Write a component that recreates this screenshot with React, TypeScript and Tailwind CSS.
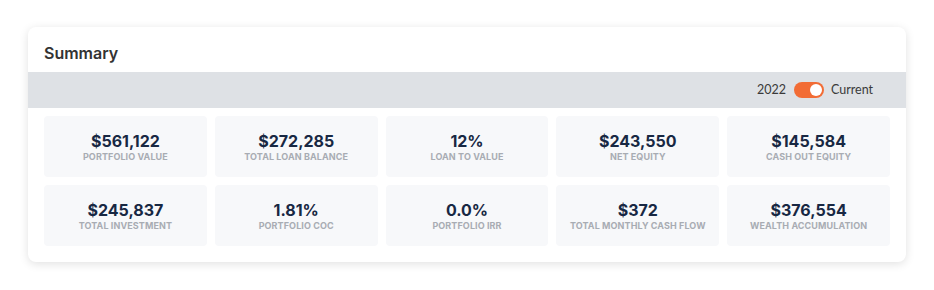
import React from "react";

const stats = [
  { v: "$561,122", l: "Portfolio Value" },
  { v: "$272,285", l: "Total Loan Balance" },
  { v: "12%", l: "Loan to Value" },
  { v: "$243,550", l: "Net Equity" },
  { v: "$145,584", l: "Cash Out Equity" },
  { v: "$245,837", l: "Total Investment" },
  { v: "1.81%", l: "Portfolio CoC" },
  { v: "0.0%", l: "Portfolio IRR" },
  { v: "$372", l: "Total Monthly Cash Flow" },
  { v: "$376,554", l: "Wealth Accumulation" },
];

export default function App() {
  return (
    <div className="w-[934px] h-[290px] bg-white pt-[27px] pl-[28px]" style={{ fontFamily: "Inter, 'Noto Sans', sans-serif" }}>
      <div className="w-[878px] h-[235px] bg-white rounded-[8px] shadow-[0_2px_10px_rgba(0,0,0,0.12)] overflow-hidden">
        <div className="h-[45px] px-4 pt-[16px]">
          <h2 className="text-[16px] leading-[20px] font-semibold text-[#333333]">Summary</h2>
        </div>
        <div className="h-[36px] bg-[#dee1e5] flex items-center justify-end pr-[33px]" style={{ fontFamily: "Lato, sans-serif" }}>
          <span className="text-[12.5px] text-[#3a3a3a]">2022</span>
          <div className="ml-[8px] w-[30px] h-[16px] rounded-full bg-[#f26c35] flex items-center justify-end pr-[2px]">
            <div className="w-[12px] h-[12px] rounded-full bg-white" />
          </div>
          <span className="ml-[7px] text-[12.5px] text-[#3a3a3a]">Current</span>
        </div>
        <div className="p-4 pt-[8px] grid grid-cols-5 gap-[8px]">
          {stats.map((s) => (
            <div key={s.l} className="h-[61px] bg-[#f7f8fa] rounded-[4px] flex flex-col items-center justify-center">
              <div className="text-[16px] leading-[20px] font-bold text-[#182843]">{s.v}</div>
              <div className="text-[9px] leading-[12px] font-bold uppercase text-[#a8acb3] tracking-[0.1px]">{s.l}</div>
            </div>
          ))}
        </div>
      </div>
    </div>
  );
}
